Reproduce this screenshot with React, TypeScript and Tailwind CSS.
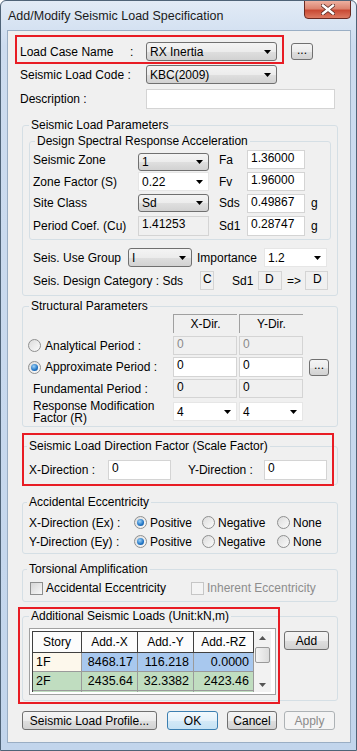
import React from "react";

const font = "font-['Liberation_Sans',Arial,sans-serif]";

const Arrow = () => (
  <svg width="7" height="4" viewBox="0 0 7 4" className="shrink-0">
    <path d="M0 0h7L3.5 4z" fill="#000" />
  </svg>
);

// dropdown list (grey button look)
const DropBtn = ({ className, value }: { className: string; value: string }) => (
  <div
    className={`flex items-center justify-between rounded-[3px] border border-[#707070] bg-[linear-gradient(to_bottom,#f4f4f4_0%,#ececec_50%,#dfdfdf_51%,#d2d2d2_100%)] pl-[3px] pr-[5px] ${className}`}
  >
    <span>{value}</span>
    <Arrow />
  </div>
);

// editable combo (white)
const DropWhite = ({ className, value }: { className: string; value: string }) => (
  <div className={`flex items-center justify-between border border-[#e6e6e6] bg-white pl-[3px] pr-[5px] ${className}`}>
    <span>{value}</span>
    <Arrow />
  </div>
);

const Box = ({ className, value = "", ro = false }: { className: string; value?: string; ro?: boolean }) => (
  <div
    className={`border border-[#d4d4d4] pl-[3px] leading-[14px] ${ro ? "bg-[#f0f0f0] text-[#000]" : "bg-white"} ${className}`}
  >
    {value}
  </div>
);

const Btn = ({ className, children, dis = false, def = false }: { className: string; children: React.ReactNode; dis?: boolean; def?: boolean }) => (
  <div
    className={`flex items-center justify-center rounded-[3px] border leading-none ${
      dis
        ? "border-[#adb2b5] bg-[#f4f4f4] text-[#8a8a8a]"
        : def
        ? "border-[#3c7fb1] bg-[linear-gradient(to_bottom,#f2f9fd_0%,#e4f1fa_50%,#d3e9f7_51%,#c6e2f4_100%)]"
        : "border-[#707070] bg-[linear-gradient(to_bottom,#f4f4f4_0%,#ececec_50%,#dfdfdf_51%,#d2d2d2_100%)]"
    } ${className}`}
  >
    {children}
  </div>
);

const Radio = ({ on = false }: { on?: boolean }) => (
  <div className="flex h-[13px] w-[13px] shrink-0 items-center justify-center rounded-full border border-[#8e8f8f] bg-[linear-gradient(135deg,#dcdcdc,#fbfbfb)]">
    {on && <div className="h-[7px] w-[7px] rounded-full bg-[radial-gradient(circle_at_40%_35%,#9fd3f7,#1f73c4_60%,#0b4a8e)]" />}
  </div>
);

const Check = ({ dis = false }: { dis?: boolean }) => (
  <div
    className={`h-[13px] w-[13px] shrink-0 border ${
      dis ? "border-[#c6c6c6] bg-[#f4f4f4]" : "border-[#8e8f8f] bg-[linear-gradient(135deg,#d6d6d6,#f8f8f8)]"
    }`}
  />
);

const Group = ({ title, className, children, lg = "ml-[6px]" }: { title: string; className: string; children: React.ReactNode; lg?: string }) => (
  <fieldset className={`rounded-[3px] border border-[#d5dfe5] ${className}`}>
    <legend className={`${lg} px-[2px] leading-[14px]`}>{title}</legend>
    {children}
  </fieldset>
);

const head = ["Story", "Add.-X", "Add.-Y", "Add.-RZ"];
const widths = ["w-[49px]", "w-[56px]", "w-[56px]", "w-[60px]"];
const rows = [
  { c: ["1F", "8468.17", "116.218", "0.0000"], bg: ["bg-[#fdf8ec]", "bg-[#a8c8ee]", "bg-[#a8c8ee]", "bg-[#a8c8ee]"] },
  { c: ["2F", "2435.64", "32.3382", "2423.46"], bg: ["bg-[#c0ddc0]", "bg-[#c0ddc0]", "bg-[#c0ddc0]", "bg-[#c0ddc0]"] },
  { c: ["3F", "2259.66", "43.5940", "2129.45"], bg: ["bg-[#c0ddc0]", "bg-[#c0ddc0]", "bg-[#c0ddc0]", "bg-[#c0ddc0]"] },
];

export default function App() {
  return (
    <div
      className={`${font} relative h-[751px] w-[357px] overflow-hidden rounded-t-[6px] border border-[#4f6377] bg-[linear-gradient(to_bottom,#e2ebf6_0%,#cddcef_6%,#c2d5ec_100%)] text-[12px] text-black`}
    >
      {/* title bar */}
      <div className="flex h-[28px] items-start justify-between">
        <div className="pl-[7px] pt-[8px] text-[12.5px] leading-[14px] text-[#1a1a1a]">Add/Modify Seismic Load Specification</div>
        <div className="mr-[5px] mt-[-1px] flex h-[19px] w-[47px] items-center justify-center rounded-b-[4px] border border-[#6a2a22] bg-[linear-gradient(to_bottom,#eeb0a0_0%,#dc8470_45%,#c94a34_55%,#dc7a62_100%)]">
          <svg width="14" height="11" viewBox="0 0 14 11">
            <path d="M2 1.5L12 9.5M12 1.5L2 9.5" stroke="#5a2a24" strokeWidth="4" strokeLinecap="square" />
            <path d="M2 1.5L12 9.5M12 1.5L2 9.5" stroke="#fff" strokeWidth="2.4" strokeLinecap="square" />
          </svg>
        </div>
      </div>

      {/* client */}
      <div className="relative ml-[6px] mt-[1px] h-[713px] w-[344px] border border-[#9aaec4] bg-[#f0f0f0]">
        {/* row 1 */}
        <div className="mt-[11px] flex h-[19px] items-center pl-[12px]">
          <div className="w-[126px]">Load Case Name&nbsp;&nbsp;&nbsp;&nbsp;&nbsp;:</div>
          <DropBtn className="h-[19px] w-[131px]" value="RX Inertia" />
          <Btn className="ml-[14px] h-[17px] w-[22px] pb-[4px]">...</Btn>
        </div>
        <div className="mt-[4px] flex h-[19px] items-center pl-[12px]">
          <div className="w-[126px]">Seismic Load Code :</div>
          <DropBtn className="h-[19px] w-[131px]" value="KBC(2009)" />
        </div>
        <div className="mt-[5px] flex h-[20px] items-center pl-[12px]">
          <div className="w-[126px]">Description :</div>
          <Box className="h-[20px] w-[189px]" />
        </div>

        {/* Seismic Load Parameters */}
        <Group title="Seismic Load Parameters" className="ml-[14px] mt-[9px] w-[316px] pb-[5px]">
          <Group title="Design Spectral Response Acceleration" lg="ml-[5px]" className="ml-[6px] mt-[2px] w-[302px] pb-[2px]">
            <div className="mt-[1px] flex h-[22px] items-center pl-[3px]">
              <div className="w-[105px]">Seismic Zone</div>
              <DropBtn className="mt-[4px] h-[18px] w-[71px]" value="1" />
              <div className="ml-[10px] w-[28px]">Fa</div>
              <Box className="mb-[2px] h-[19px] w-[58px]" value="1.36000" />
            </div>
            <div className="flex h-[21px] items-center pl-[3px]">
              <div className="w-[105px]">Zone Factor (S)</div>
              <DropWhite className="h-[19px] w-[71px]" value="0.22" />
              <div className="ml-[10px] w-[28px]">Fv</div>
              <Box className="h-[19px] w-[58px]" value="1.96000" />
            </div>
            <div className="flex h-[22px] items-center pl-[3px]">
              <div className="w-[105px]">Site Class</div>
              <DropBtn className="h-[18px] w-[71px]" value="Sd" />
              <div className="ml-[10px] w-[28px]">Sds</div>
              <Box className="h-[19px] w-[58px]" value="0.49867" />
              <div className="ml-[6px]">g</div>
            </div>
            <div className="mt-[1px] flex h-[22px] items-center pl-[3px]">
              <div className="w-[105px]">Period Coef. (Cu)</div>
              <Box ro className="h-[20px] w-[71px]" value="1.41253" />
              <div className="ml-[10px] w-[28px]">Sd1</div>
              <Box className="h-[20px] w-[58px]" value="0.28747" />
              <div className="ml-[6px]">g</div>
            </div>
          </Group>
          <div className="mt-[8px] flex h-[19px] items-center pl-[10px]">
            <div className="w-[95px]">Seis. Use Group</div>
            <DropBtn className="h-[19px] w-[64px]" value="I" />
            <div className="ml-[5px] w-[67px]">Importance</div>
            <DropWhite className="h-[19px] w-[63px]" value="1.2" />
          </div>
          <div className="mt-[4px] flex h-[19px] items-center pl-[10px]">
            <div className="w-[167px]">Seis. Design Category : Sds</div>
            <Box ro className="h-[19px] w-[14px] !pl-[2px]" value="C" />
            <div className="ml-[18px] w-[26px]">Sd1</div>
            <Box ro className="h-[19px] w-[24px] !pl-[6px]" value="D" />
            <div className="ml-[5px] w-[18px]">=&gt;</div>
            <Box ro className="h-[19px] w-[23px] !pl-[7px]" value="D" />
          </div>
        </Group>

        {/* Structural Parameters */}
        <Group title="Structural Parameters" className="ml-[14px] mt-[3px] w-[316px] pb-[5px]">
          <div className="mt-[1px] flex h-[19px] pl-[150px]">
            <div className="flex w-[64px] items-center justify-center border-l border-t border-[#a0a0a0]">X-Dir.</div>
            <div className="ml-[2px] flex w-[64px] items-center justify-center border-l border-t border-[#a0a0a0]">Y-Dir.</div>
          </div>
          <div className="mt-[3px] flex h-[19px] items-center pl-[5px]">
            <Radio />
            <div className="ml-[4px] w-[128px]">Analytical Period :</div>
            <Box ro className="h-[19px] w-[64px] text-[#8a8a8a]" value="0" />
            <Box ro className="ml-[2px] h-[19px] w-[64px] text-[#8a8a8a]" value="0" />
          </div>
          <div className="mt-[2px] flex h-[20px] items-center pl-[5px]">
            <Radio on />
            <div className="ml-[4px] w-[128px]">Approximate Period :</div>
            <Box className="h-[20px] w-[64px]" value="0" />
            <Box className="ml-[2px] h-[20px] w-[64px]" value="0" />
            <Btn className="ml-[6px] h-[17px] w-[20px] pb-[4px]">...</Btn>
          </div>
          <div className="mt-[2px] flex h-[19px] items-center pl-[10px]">
            <div className="w-[140px]">Fundamental Period :</div>
            <Box ro className="h-[19px] w-[64px]" value="0" />
            <Box ro className="ml-[2px] h-[19px] w-[64px]" value="0" />
          </div>
          <div className="mt-[4px] flex h-[19px] items-center pl-[10px]">
            <div className="w-[140px] leading-[12px]">
              Response Modification
              <br />
              Factor (R)
            </div>
            <DropWhite className="h-[19px] w-[64px]" value="4" />
            <DropWhite className="ml-[2px] h-[19px] w-[64px]" value="4" />
          </div>
        </Group>

        {/* Direction factor */}
        <Group title="Seismic Load Direction Factor (Scale Factor)" lg="ml-[4px]" className="ml-[14px] mt-[12px] w-[316px] pb-[4px]">
          <div className="mt-[7px] flex h-[20px] items-center pl-[6px]">
            <div className="w-[79px]">X-Direction :</div>
            <Box className="h-[20px] w-[63px]" value="0" />
            <div className="ml-[17px] w-[76px]">Y-Direction :</div>
            <Box className="h-[20px] w-[63px]" value="0" />
          </div>
        </Group>

        {/* Accidental Eccentricity */}
        <Group title="Accidental Eccentricity" lg="ml-[4px]" className="ml-[14px] mt-[10px] w-[316px] pb-[2px]">
          {["X-Direction (Ex) :", "Y-Direction (Ey) :"].map((t, i) => (
            <div key={t} className={`${i === 0 ? "mt-[4px]" : ""} flex h-[19px] items-center pl-[6px]`}>
              <div className="w-[105px]">{t}</div>
              <div className="flex w-[68px] items-center gap-[3px]">
                <Radio on />
                <span>Positive</span>
              </div>
              <div className="flex w-[75px] items-center gap-[3px]">
                <Radio />
                <span>Negative</span>
              </div>
              <div className="flex items-center gap-[3px]">
                <Radio />
                <span>None</span>
              </div>
            </div>
          ))}
        </Group>

        {/* Torsional */}
        <Group title="Torsional Amplification" lg="ml-[4px]" className="ml-[14px] mt-[8px] w-[316px] pb-[4px]">
          <div className="mt-[3px] flex h-[18px] items-center pl-[7px]">
            <Check />
            <div className="ml-[3px] w-[145px]">Accidental Eccentricity</div>
            <Check dis />
            <div className="ml-[3px] text-[#8d8d8d]">Inherent Eccentricity</div>
          </div>
        </Group>

        {/* Additional loads */}
        <Group title="Additional Seismic Loads (Unit:kN,m)" className="ml-[14px] mt-[7px] w-[316px] pb-[5px]">
          <div className="mt-[5px] flex items-start pl-[6px]">
            <div className="flex h-[67px] w-[247px] border border-[#a0a0a0] bg-white p-[2px]">
              <div className="w-[222px] overflow-hidden border-l border-t border-[#404040]">
                <div className="flex h-[21px]">
                  {head.map((h, i) => (
                    <div
                      key={h}
                      className={`${widths[i]} flex items-center justify-center border-b border-r border-[#404040] bg-[#fcfcfc]`}
                    >
                      {h}
                    </div>
                  ))}
                </div>
                {rows.map((r) => (
                  <div key={r.c[0]} className="flex h-[19px] text-[12.5px]">
                    {r.c.map((c, i) => (
                      <div
                        key={i}
                        className={`${widths[i]} ${r.bg[i]} flex items-center border-b border-r border-[#9a9a9a] ${
                          i === 0 ? "pl-[3px]" : "justify-end pr-[4px]"
                        }`}
                      >
                        {c}
                      </div>
                    ))}
                  </div>
                ))}
              </div>
              <div className="flex w-[17px] flex-col items-center bg-[#f2f2f2]">
                <svg width="7" height="4" viewBox="0 0 7 4" className="mt-[5px]">
                  <path d="M3.5 0L7 4H0z" fill="#555" />
                </svg>
                <div className="mt-[7px] h-[16px] w-[15px] rounded-[2px] border border-[#9a9a9a] bg-[linear-gradient(to_right,#f4f4f4,#dcdcdc)]" />
                <div className="flex-1" />
                <svg width="7" height="4" viewBox="0 0 7 4" className="mb-[5px]">
                  <path d="M0 0h7L3.5 4z" fill="#555" />
                </svg>
              </div>
            </div>
            <Btn className="ml-[8px] mt-[3px] h-[19px] w-[45px]">Add</Btn>
          </div>
        </Group>

        {/* bottom buttons */}
        <div className="mt-[10px] flex h-[19px] pl-[14px]">
          <Btn className="h-[19px] w-[135px]">Seismic Load Profile...</Btn>
          <Btn def className="ml-[10px] h-[19px] w-[51px]">OK</Btn>
          <Btn className="ml-[9px] h-[19px] w-[50px]">Cancel</Btn>
          <Btn dis className="ml-[7px] h-[19px] w-[51px]">Apply</Btn>
        </div>

        {/* red annotation frames */}
        <div className="pointer-events-none absolute left-[7px] top-[4px] h-[29px] w-[269px] border-2 border-[#e81c24]" />
        <div className="pointer-events-none absolute left-[14px] top-[402px] h-[53px] w-[312px] border-2 border-[#e81c24]" />
        <div className="pointer-events-none absolute left-[10px] top-[576px] h-[97px] w-[262px] border-2 border-[#e81c24]" />
      </div>
    </div>
  );
}
